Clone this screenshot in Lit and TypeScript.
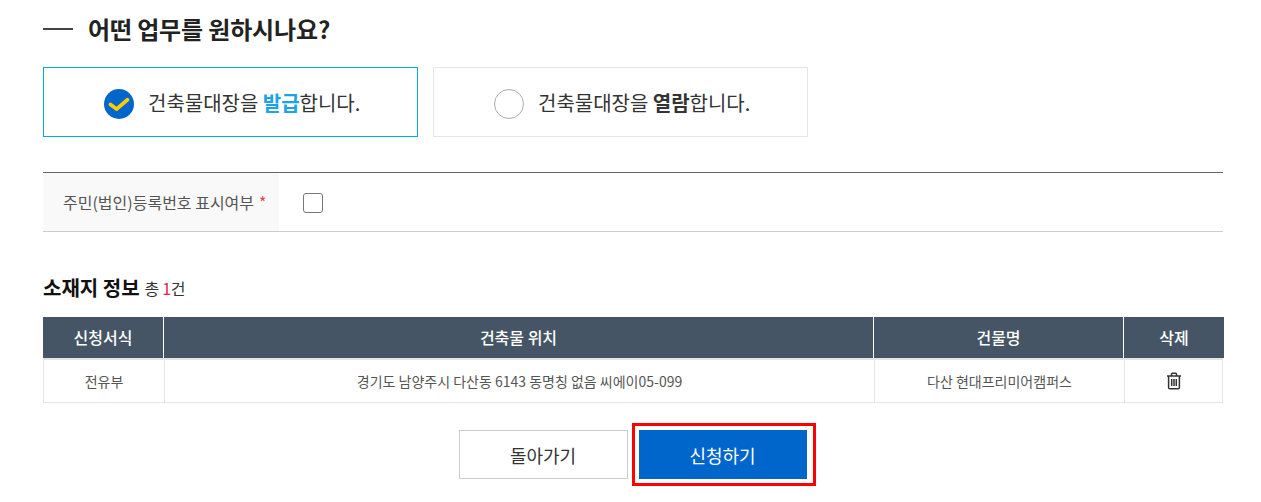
import { LitElement, html, css } from "lit";
import { customElement } from "lit/decorators.js";

@customElement("app-root")
export class AppRoot extends LitElement {
  static styles = css`
    :host {
      display: block;
      width: 1261px;
      height: 502px;
      overflow: hidden;
      background: #fff;
      font-family: "Noto Sans CJK KR", "Noto Sans", sans-serif;
      color: #333;
      box-sizing: border-box;
      padding: 0 38px 0 43px;
    }
    * { box-sizing: border-box; }
    .title {
      display: flex;
      align-items: center;
      height: 57px;
      gap: 15px;
      font-size: 24px;
      font-weight: 700;
      color: #222;
      letter-spacing: -0.15px;
    }
    .dash { width: 30px; height: 2px; background: #444; }
    .cards { display: flex; gap: 15px; margin-top: 10px; }
    .card {
      width: 375px;
      height: 70px;
      border: 1px solid #e5e5e5;
      display: flex;
      align-items: center;
      padding-left: 60px;
      gap: 14px;
      font-size: 20px;
      letter-spacing: -0.02px;
      color: #333;
    }
    .card.on { border-color: #00a9e8; }
    .card b { font-weight: 700; }
    .card.on b { color: #1aa3e8; }
    .icon { width: 30px; height: 30px; flex: none; display: block; margin-top: 4px; }
    .row {
      margin-top: 35px;
      height: 60px;
      border-top: 1px solid #666;
      border-bottom: 1px solid #ccc;
      display: flex;
      align-items: stretch;
    }
    .row-label {
      width: 236px;
      background: #f9f9f9;
      display: flex;
      align-items: center;
      padding-left: 20px;
      font-size: 16px;
      color: #555;
      gap: 5px;
    }
    .req { color: #e8404a; }
    .row-value { display: flex; align-items: center; padding-left: 24px; padding-top: 2px; }
    .check {
      width: 20px;
      height: 20px;
      border: 1px solid #777;
      border-radius: 3px;
      background: #fff;
    }
    .sub {
      margin-top: 40px;
      height: 30px;
      display: flex;
      align-items: center;
      gap: 5px;
      color: #111;
    }
    .sub strong { font-size: 20px; font-weight: 700; }
    .sub span { font-size: 16px; letter-spacing: -0.3px; color: #333; margin-top: 2px; }
    .sub i { font-style: normal; color: #e8205a; }
    .thead, .tbody { display: grid; }
    .thead {
      margin-top: 15px;
      grid-template-columns: 120px 710px 250px 101px;
      width: 1181px;
      height: 41px;
      background: #455565;
      color: #fff;
      font-size: 16px;
      font-weight: 500;
    }
    .thead div { display: flex; align-items: center; justify-content: center; padding-bottom: 1px; }
    .thead div + div { border-left: 1px solid #fff; }
    .tbody {
      grid-template-columns: 120px 710px 250px 98px;
      width: 1180px;
      height: 45px;
      border: 1px solid #e5e5e5;
      border-top-width: 2px;
      font-size: 14px;
      color: #555;
    }
    .tbody div { display: flex; align-items: center; justify-content: center; }
    .tbody div + div { border-left: 1px solid #e5e5e5; }
    .trash { width: 16px; height: 18px; display: block; }
    .actions { display: flex; justify-content: center; gap: 11px; margin-top: 27px; padding-right: 1px; }
    .btn {
      height: 49px;
      font-size: 18px;
      display: flex;
      align-items: center;
      justify-content: center;
    }
    .back { width: 169px; border: 1px solid #ccc; color: #333; background: #fff; }
    .go {
      position: relative;
      width: 168px;
      background: #0066cc;
      color: #fff;
    }
    .go::after {
      content: "";
      position: absolute;
      left: -7px;
      right: -9px;
      top: -7px;
      bottom: -7px;
      border: 3px solid #f00;
    }
  `;

  render() {
    return html`
      <div class="title"><span class="dash"></span><span>어떤 업무를 원하시나요?</span></div>
      <div class="cards">
        <div class="card on">
          <svg class="icon" viewBox="0 0 30 30">
            <circle cx="15" cy="15" r="15" fill="#0066cc"></circle>
            <path d="M6.5 15.5l6 4.6L23.5 10.8" fill="none" stroke="#fc0" stroke-width="3.8" stroke-linecap="round" stroke-linejoin="round"></path>
          </svg>
          <span>건축물대장을 <b>발급</b>합니다.</span>
        </div>
        <div class="card">
          <svg class="icon" viewBox="0 0 30 30">
            <circle cx="15" cy="15" r="14.5" fill="#fff" stroke="#aaa"></circle>
          </svg>
          <span>건축물대장을 <b>열람</b>합니다.</span>
        </div>
      </div>
      <div class="row">
        <div class="row-label"><span>주민(법인)등록번호 표시여부</span><span class="req">*</span></div>
        <div class="row-value"><div class="check"></div></div>
      </div>
      <div class="sub"><strong>소재지 정보</strong><span>총 <i>1</i>건</span></div>
      <div class="thead">
        <div>신청서식</div><div>건축물 위치</div><div>건물명</div><div>삭제</div>
      </div>
      <div class="tbody">
        <div>전유부</div>
        <div>경기도 남양주시 다산동 6143 동명칭 없음 씨에이05-099</div>
        <div>다산 현대프리미어캠퍼스</div>
        <div>
          <svg class="trash" viewBox="0 0 16 18" fill="none" stroke="#333" stroke-width="1.5">
            <path d="M1 4h14"></path>
            <path d="M5.5 4V2.2c0-.6.4-1 1-1h3c.6 0 1 .4 1 1V4"></path>
            <path d="M2.6 4v11.5c0 .8.5 1.3 1.3 1.3h8.2c.8 0 1.3-.5 1.3-1.3V4"></path>
            <path d="M5.7 7v7M8 7v7M10.3 7v7"></path>
          </svg>
        </div>
      </div>
      <div class="actions">
        <div class="btn back">돌아가기</div>
        <div class="btn go">신청하기</div>
      </div>
    `;
  }
}
